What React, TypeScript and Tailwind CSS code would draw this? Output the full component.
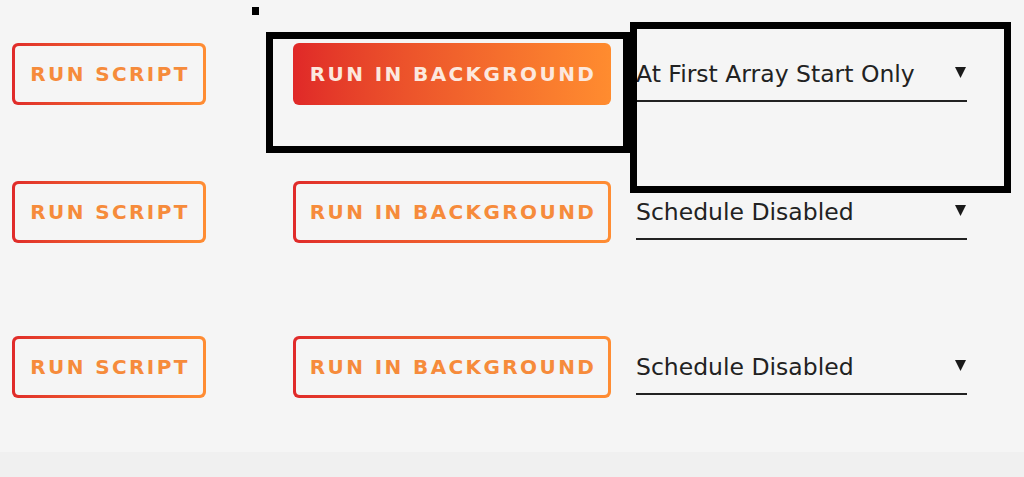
import React from "react";

const font = { fontFamily: '"DejaVu Sans", "Noto Sans", sans-serif' };

function OutlineButton({ label, width }: { label: string; width: string }) {
  return (
    <div
      className={`${width} h-[62px] shrink-0 rounded-[6px] bg-gradient-to-r from-[#e02a2a] to-[#ff8d33] p-[3px]`}
    >
      <div className="flex h-full w-full items-center justify-center rounded-[4px] bg-[#f5f5f5]">
        <span className="pl-[2px] text-[20px] font-bold uppercase tracking-[2.4px] text-[#f68b3b]">
          {label}
        </span>
      </div>
    </div>
  );
}

function FilledButton({ label }: { label: string }) {
  return (
    <div className="flex h-[62px] w-[318px] shrink-0 items-center justify-center rounded-[6px] bg-gradient-to-r from-[#e02828] to-[#ff8c2f]">
      <span className="pl-[2px] text-[20px] font-bold uppercase tracking-[2.4px] text-[#fce8de]">
        {label}
      </span>
    </div>
  );
}

function Select({ value }: { value: string }) {
  return (
    <div className="ml-[25px] flex w-[331px] shrink-0 items-start justify-between border-b-2 border-[#222] pb-[12px] pt-[17px]">
      <span className="text-[23.5px] leading-[28px] text-[#222]">{value}</span>
      <svg
        className="mr-[1px] mt-[7px]"
        width="11"
        height="11"
        viewBox="0 0 11 11"
      >
        <polygon points="0,0 11,0 5.5,11" fill="#1a1a1a" />
      </svg>
    </div>
  );
}

function Row({
  filled,
  value,
  className,
}: {
  filled?: boolean;
  value: string;
  className?: string;
}) {
  return (
    <div className={`flex items-start ${className ?? ""}`}>
      <OutlineButton label="Run Script" width="w-[194px]" />
      <div className="ml-[87px]">
        {filled ? (
          <FilledButton label="Run in Background" />
        ) : (
          <OutlineButton label="Run in Background" width="w-[318px]" />
        )}
      </div>
      <Select value={value} />
    </div>
  );
}

export default function App() {
  return (
    <div className="relative flex h-[477px] w-[1024px] flex-col bg-[#f5f5f5]" style={font}>
      <div className="h-[452px] pl-[12px] pt-[43px]">
        <Row filled value="At First Array Start Only" />
        <Row value="Schedule Disabled" className="mt-[76px]" />
        <Row value="Schedule Disabled" className="mt-[93px]" />
      </div>
      <div className="h-[25px] bg-[#f0f0f0]" />

      {/* annotation marks */}
      <div className="absolute left-[252px] top-[7px] h-[8px] w-[7px] bg-black" />
      <div className="absolute left-[266px] top-[32px] h-[121px] w-[364px] border-[7px] border-black" />
      <div className="absolute left-[630px] top-[22px] h-[171px] w-[381px] border-[7px] border-black" />
    </div>
  );
}
